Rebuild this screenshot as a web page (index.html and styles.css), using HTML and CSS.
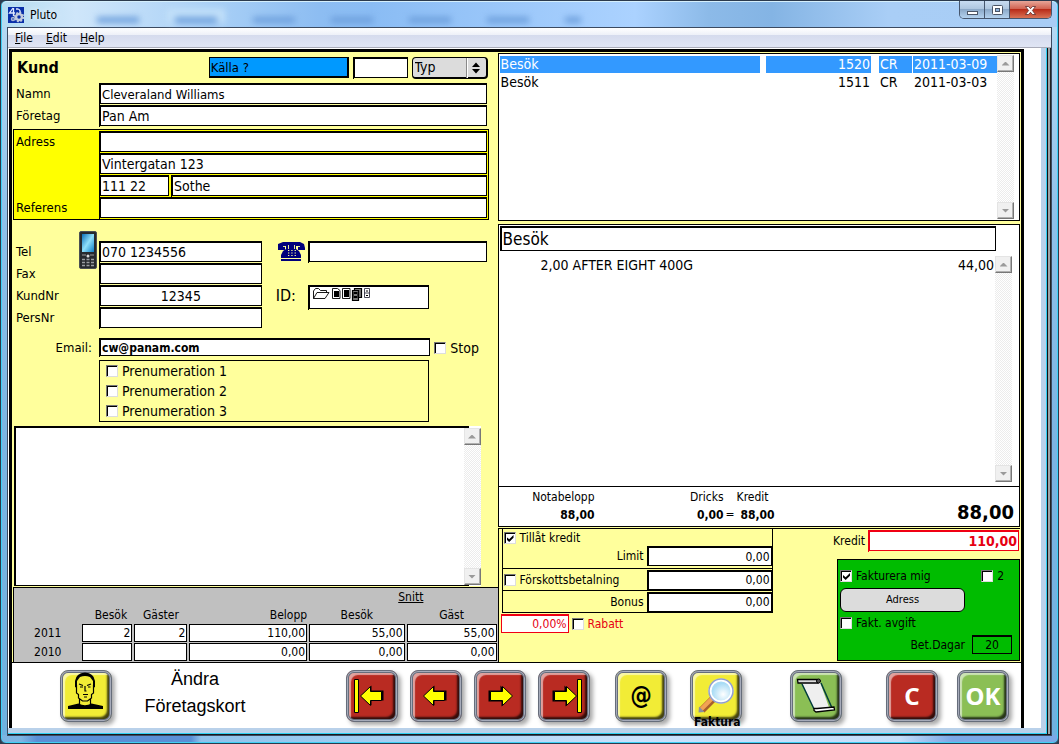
FILE: index.html
```html
<!DOCTYPE html>
<html lang="sv">
<head>
<meta charset="utf-8">
<title>Pluto</title>
<link rel="stylesheet" href="styles.css">
</head>
<body>
<div class="window">
  <header class="titlebar">
    <svg class="app-icon" width="16" height="16" viewBox="0 0 16 16" aria-hidden="true">
      <rect width="16" height="16" fill="#0a2fa8"/>
      <path d="M5 1L1.500 6H7M5.500 1V9M8 2h2q3 1 2 5" fill="none" stroke="#dfe8ff" stroke-width="1.300"/>
      <circle cx="11" cy="10" r="3" fill="none" stroke="#c3cbdc" stroke-width="2.500"/>
      <circle cx="11" cy="10" r="4.500" fill="none" stroke="#c3cbdc" stroke-width="1.500" stroke-dasharray="2 1.500"/>
      <circle cx="5" cy="12" r="1.500" fill="none" stroke="#a9b6d6" stroke-width="1.500"/>
    </svg>
    <h1 class="title">Pluto</h1>
    <div class="glass" aria-hidden="true"><i></i><i class="lit"></i><i></i><i></i><i></i><i></i><i class="short"></i></div>
    <div class="controls">
      <button type="button" aria-label="Minimize"><svg width="13" height="13" viewBox="0 0 13 13"><rect x="1.500" y="7.500" width="10" height="3" fill="#fff" stroke="#4b5566"/></svg></button>
      <button type="button" aria-label="Maximize"><svg width="13" height="13" viewBox="0 0 13 13"><rect x="1.500" y="1.500" width="10" height="9" rx="1" fill="#fff" stroke="#4b5566"/><rect x="4.500" y="4.500" width="4" height="3" fill="#8fb4dc" stroke="#4b5566"/></svg></button>
      <button type="button" class="close" aria-label="Close"><svg width="13" height="13" viewBox="0 0 13 13"><path d="M1.500 2.500h3l2 2.200 2-2.200h3L8.400 6.500l3.100 4h-3l-2-2.200-2 2.200h-3l3.100-4z" fill="#fff" stroke="#5a2a2a" stroke-width=".8"/></svg></button>
    </div>
  </header>

  <div class="client">
    <nav class="menu">
      <a href="#file"><u>F</u>ile</a><a href="#edit"><u>E</u>dit</a><a href="#help"><u>H</u>elp</a>
    </nav>
    <div class="scroller">
      <form class="card">
        <div class="panels">
          <section class="customer">
            <div class="head">
              <h2>Kund</h2>
              <input class="source" type="text" value="Källa ?" aria-label="Källa">
              <span class="slot code"><input class="field" type="text" aria-label="Kod"></span>
              <span class="picker">
                <select aria-label="Typ"><option>Typ</option></select>
                <svg width="20" height="20" viewBox="0 0 20 20" aria-hidden="true"><path d="M.5 0V20" stroke="#8a8a8a"/><path d="M1.500 0V20" stroke="#fff"/><path d="M10 4.500L14 9H6zM10 15.500L6 11h8z"/></svg>
              </span>
            </div>
            <div class="rows top">
              <label for="namn">Namn</label><span class="slot"><input class="field compact" id="namn" value="Cleveraland Williams"></span>
              <label for="foretag">Företag</label><span class="slot"><input class="field" id="foretag" value="Pan Am"></span>
            </div>
            <div class="rows address">
              <label for="adress">Adress</label><span class="slot"><input class="field" id="adress"></span>
              <span></span><span class="slot"><input class="field" aria-label="Gata" value="Vintergatan 123"></span>
              <span></span><span class="city"><span class="slot"><input class="field" aria-label="Postnummer" value="111 22"></span><span class="slot"><input class="field" aria-label="Ort" value="Sothe"></span></span>
              <label for="referens">Referens</label><span class="slot"><input class="field" id="referens"></span>
            </div>
            <div class="contact">
              <div class="rows numbers">
                <label for="tel">Tel
                  <svg class="mobile" width="18" height="38" viewBox="0 0 18 38" aria-hidden="true">
                    <defs><linearGradient id="lcd" x2="1" y2="1"><stop offset="0" stop-color="#0b6fb8"/><stop offset=".5" stop-color="#8fe0fa"/><stop offset="1" stop-color="#0a7cc4"/></linearGradient></defs>
                    <rect x=".5" y=".5" width="17" height="37" rx="1.500" fill="#262a2e" stroke="#4b5054"/>
                    <rect x="3" y="3" width="12" height="18" fill="url(#lcd)"/>
                    <path d="M3 24h4M11 24h4" stroke="#999"/><circle cx="9" cy="25" r="1.500" fill="#ddd"/>
                    <path d="M3 28.500h12M3 31.500h12M3 34.500h12" stroke="#9a9ea2" stroke-width="1.300" stroke-dasharray="3 1.500"/>
                  </svg>
                </label><span class="slot"><input class="field" id="tel" value="070 1234556"></span>
                <label for="fax">Fax</label><span class="slot"><input class="field" id="fax"></span>
                <label for="kundnr">KundNr</label><span class="slot"><input class="field center" id="kundnr" value="12345"></span>
                <label for="persnr">PersNr</label><span class="slot"><input class="field" id="persnr"></span>
              </div>
              <div class="extra">
                <svg width="27" height="21" viewBox="0 0 27 21" aria-hidden="true">
                  <path d="M5 1h17l4 2 1 4v2h-7V5h-2v3l3 2 2 4v6H3v-6l2-4 3-2V5H7v4H0V3z" fill="#00007c"/>
                  <path d="M3 17.500h20" stroke="#ffff9c"/><path d="M5 5.500h3M19 5.500h3M10.500 4v4M16.500 4v4" stroke="#ffff9c" stroke-width=".9"/>
                  <path d="M10 9.500h8M10 12h8M10 14.500h8" stroke="#ffff9c" stroke-dasharray="1.300 2"/>
                </svg>
                <span class="slot"><input class="field" aria-label="Telefon arbete"></span>
                <label class="big" for="idkort">ID:</label>
                <span class="slot idslot"><input class="field" id="idkort">
                  <svg class="files" width="60" height="16" viewBox="0 0 60 16" aria-hidden="true">
                    <path d="M1.500 11.500V4l2-2.500h3l2 2h6v2M1.500 11.500l3.500-6h12l-4 6z" fill="#fff" stroke="#000" stroke-width=".9"/>
                    <path d="M20.500 1.500h5l2.500 2v8h-7.500z" fill="#fff" stroke="#000" stroke-width=".9"/><path d="M22 4h5v6h-5z"/>
                    <path d="M30.500 1.500h7.500v10h-7.500z" fill="#fff" stroke="#000" stroke-width=".9"/><path d="M32 3h5v7h-5z"/>
                    <path d="M40.500 3.500h6v10h-6zM42.500 3.500v-2h7v9h-3" fill="#777" stroke="#000" stroke-width="1.200"/><path d="M41.500 5h4v6h-4z"/><path d="M42 8h3" stroke="#fff"/>
                    <path d="M52.500 1.500h5v9h-5zM52.500 6h5" fill="#fff" stroke="#334" stroke-width=".9"/><path d="M54 4h2M54 8.500h2" stroke="#000"/>
                  </svg>
                </span>
              </div>
            </div>
            <div class="email">
              <label for="email">Email:</label>
              <span class="slot"><input class="field" id="email" type="email" value="cw@panam.com"></span>
              <label class="tick"><input type="checkbox">Stop</label>
            </div>
            <fieldset class="subs" aria-label="Prenumerationer">
              <label class="tick"><input type="checkbox">Prenumeration 1</label>
              <label class="tick"><input type="checkbox">Prenumeration 2</label>
              <label class="tick"><input type="checkbox">Prenumeration 3</label>
            </fieldset>
            <div class="notes">
              <textarea aria-label="Anteckningar"></textarea>
              <div class="bar"><button type="button" aria-label="Upp"></button><button type="button" class="down" aria-label="Ned"></button></div>
            </div>
            <div class="stats">
              <table>
                <colgroup><col class="c0"><col class="c1"><col class="c2"><col class="c3"><col class="c4"><col class="c5"></colgroup>
                <thead>
                  <tr class="super"><th colspan="4"></th><th colspan="2"><u>Snitt</u></th></tr>
                  <tr><th></th><th class="nudge">Besök</th><th>Gäster</th><th class="right">Belopp</th><th>Besök</th><th>Gäst</th></tr>
                </thead>
                <tbody>
                  <tr><th>2011</th><td>2</td><td>2</td><td>110,00</td><td>55,00</td><td>55,00</td></tr>
                  <tr><th>2010</th><td></td><td></td><td>0,00</td><td>0,00</td><td>0,00</td></tr>
                </tbody>
              </table>
            </div>
          </section>

          <section class="sales">
            <div class="history">
              <table>
                <colgroup><col><col class="nr"><col class="kind"><col class="date"></colgroup>
                <tr class="selected"><td><span>Besök</span></td><td class="right"><span>1520</span></td><td><span>CR</span></td><td><span>2011-03-09</span></td></tr>
                <tr><td><span>Besök</span></td><td class="right"><span>1511</span></td><td><span>CR</span></td><td><span>2011-03-03</span></td></tr>
              </table>
              <div class="bar"><button type="button" aria-label="Upp"></button><button type="button" class="down" aria-label="Ned"></button></div>
            </div>
            <div class="visit">
              <input class="field visit-name" aria-label="Händelse" value="Besök">
              <div class="items">
                <div class="item"><span>2,00 AFTER EIGHT 400G</span><span>44,00</span></div>
                <div class="bar"><button type="button" aria-label="Upp"></button><button type="button" class="down" aria-label="Ned"></button></div>
              </div>
              <div class="sums">
                <div class="s1"><span>Notabelopp</span><b>88,00</b></div>
                <div class="s2"><span>Dricks</span><b>0,00</b></div>
                <span class="eq">=</span>
                <div class="s3"><span>Kredit</span><b>88,00</b></div>
                <strong>88,00</strong>
              </div>
            </div>
            <div class="terms">
              <div class="credit">
                <div class="limits">
                  <div class="line first"><label class="tick"><input type="checkbox" checked>Tillåt kredit</label><label for="limit">Limit</label><input class="field" id="limit" value="0,00"></div>
                  <div class="line"><label class="tick"><input type="checkbox">Förskottsbetalning</label><input class="field" aria-label="Förskott" value="0,00"></div>
                  <div class="line"><label for="bonus">Bonus</label><input class="field" id="bonus" value="0,00"></div>
                </div>
                <div class="discount"><input class="field red" aria-label="Rabatt procent" value="0,00%"><label class="tick"><input type="checkbox">Rabatt</label></div>
              </div>
              <div class="invoice">
                <div class="owed"><label for="kredit">Kredit</label><span class="slot red"><input class="field red" id="kredit" value="110,00"></span></div>
                <div class="green">
                  <div class="pair"><label class="tick"><input type="checkbox" checked>Fakturera mig</label><label class="tick two"><input type="checkbox">2</label></div>
                  <button type="button" class="pill">Adress</button>
                  <label class="tick fee"><input type="checkbox">Fakt. avgift</label>
                  <div class="days"><label for="dagar">Bet.Dagar</label><input class="field" id="dagar" value="20"></div>
                </div>
              </div>
            </div>
          </section>
        </div>

        <div class="toolbar">
          <button type="button" class="key yellow person" aria-label="Kundbild">
            <svg width="36" height="38" viewBox="0 0 36 38"><path d="M7 15V9Q8 1 17 .5 26 1 27 9v6l-2 1V9l-3-4q-5-2-10 0L9 9v7z"/><path d="M8.500 13v8l2 1.500v3.500l4 3h5l4-3v-3.500l2-1.500v-8M11.500 27v5M22.500 27v5" fill="none" stroke="#000" stroke-width="1.200"/><path d="M11 12l4 1.500M19 13.500l4-1.500M12 15h3M20 15h2.500M17 14v5h1.500M15 22.500h5M16 25h3" fill="none" stroke="#000" stroke-width="1.200"/><path d="M0 37v-3l10.500-2.500q6.500 3.500 13 0L35 34v3z"/></svg>
          </button>
          <p class="edit">Ändra<br>Företagskort</p>
          <div class="nav">
            <button type="button" class="key crimson" aria-label="Första"><svg width="40" height="38" viewBox="0 0 40 38"><path d="M2.500 2.500h4v33h-4z" fill="#ff0" stroke="#000"/><path d="M10 18l9.500-9.500v5H31.500v10h-12v5z"/><path d="M8.500 19l10-9.500v5H29.500v9H18.500v5z" fill="#ff0" stroke="#000"/></svg></button>
            <button type="button" class="key crimson" aria-label="Föregående"><svg width="40" height="38" viewBox="0 0 40 38"><path d="M9 18l9.500-9.500v5H30.500v10h-12v5z"/><path d="M7.500 19l10-9.500v5H28.500v9H17.500v5z" fill="#ff0" stroke="#000"/></svg></button>
            <button type="button" class="key crimson" aria-label="Nästa"><svg width="40" height="38" viewBox="0 0 40 38"><path d="M31 20l-9.500 9.500v-5H8.500v-11h12v-5z"/><path d="M32.500 19l-10 9.500v-5H10.500v-9h12v-5z" fill="#ff0" stroke="#000"/></svg></button>
            <button type="button" class="key crimson" aria-label="Sista"><svg width="40" height="38" viewBox="0 0 40 38"><path d="M31 20l-9.500 9.500v-5H8.500v-11h12v-5z"/><path d="M32.500 19l-10 9.500v-5H10.500v-9h12v-5z" fill="#ff0" stroke="#000"/><path d="M33.500 2.500h4v33h-4z" fill="#ff0" stroke="#000"/></svg></button>
          </div>
          <button type="button" class="key yellow mail">@</button>
          <button type="button" class="key yellow find" aria-labelledby="fakt">
            <svg width="40" height="40" viewBox="0 0 40 40"><defs><radialGradient id="lens" cx=".6" cy=".65"><stop offset="0" stop-color="#fff"/><stop offset="1" stop-color="#a9dcf5"/></radialGradient></defs><path d="M17 23L6 34" stroke="#a85f2a" stroke-width="7"/><path d="M16.500 22L5 33.500" stroke="#f2a354" stroke-width="4"/><path d="M3 30.500l5.500 5.500-6 .5z" fill="#8a8fa0"/><circle cx="25" cy="15" r="11" fill="url(#lens)" stroke="#fff" stroke-width="3"/><circle cx="25" cy="15" r="12" fill="none" stroke="#8f9dd0" stroke-width="1.500"/></svg>
            <span id="fakt">Faktura</span>
          </button>
          <div class="final">
            <button type="button" class="key lime scroll" aria-label="Kvitto"><svg width="40" height="36" viewBox="0 0 40 36"><path d="M6 5L18 32h16L24 4z" fill="#efefef"/><path d="M6 6l12 25M25 5l11 25" stroke="#003c3c" stroke-width="1.500"/><path d="M1.500 1.500H21l1 3.500H2z" fill="#ddd" stroke="#000" stroke-width="1.300"/><circle cx="22.500" cy="3" r="2" fill="#555" stroke="#000"/><path d="M18 30.500h3l17-1.500.5 3-18.500 2-2-1.500z" fill="#fff" stroke="#000" stroke-width="1.300"/></svg></button>
            <button type="button" class="key crimson cancel">C</button>
            <button type="button" class="key lime">OK</button>
          </div>
        </div>
      </form>
    </div>
  </div>
</div>
</body>
</html>
```
FILE: styles.css
```css
:root {
  --ui: "DejaVu Sans Condensed", "DejaVu Sans", sans-serif;
  --pale: #ffff9c;
}
* { box-sizing: border-box; }
html { background: #2c3e50; }
body { margin: 0; font: 14px/16px var(--ui); color: #000; }
input, select, textarea, button { font: inherit; color: inherit; margin: 0; border-radius: 0; }
h1, h2, p { margin: 0; }

/* window frame */
.window {
  display: flex; flex-direction: column; min-height: 100vh;
  padding: 0 6px 7px;
  border: 1px solid #2b3a4d; border-radius: 6px;
  box-shadow: inset 0 0 0 1px #3fd0f5;
  background:
    linear-gradient(90deg, transparent 20px, #5a8fd6 36px 190px, transparent 200px) 0 100% / 100% 8px no-repeat,
    linear-gradient(90deg, #7cb4e2, #9bcaf0 30%, #c9e1fb 60%, #c5defa 85%, #7ca8e6 90%) 0 100% / 100% 8px no-repeat,
    linear-gradient(#b9dcf4, #8fc0ea 30%, #7cb4e2 60%, #6fb1e0);
}
.titlebar {
  display: flex; align-items: center; height: 26px; margin: 0 -5px; padding-left: 6px;
  border-top: 1px solid #d5effc; border-radius: 5px 5px 0 0;
  background: linear-gradient(90deg, #b4dcf0, #cfe6fa 7%, #a9d0f6 20%, #8dbdf2 30%, #8abcf4 35%, #abd2ff 60%, #8cbae8 67%, #84b4e4 73%, #a9cef6 84%, #a8cdf5);
}
.title { font-size: 12px; font-weight: 400; margin-left: 6px; text-shadow: 0 0 6px #fff; }
.glass { display: flex; flex: 1; gap: 36px; margin-left: 40px; filter: blur(3px); overflow: hidden; }
.glass i { width: 42px; height: 6px; margin: 10px 0 0; background: #6d9fdc; }
.glass .lit { box-shadow: 0 0 0 8px #c2e0f9; }
.glass .short { width: 16px; }
.controls { display: flex; align-self: flex-start; margin: -1px 5px 0 0; border: 1px solid #46566d; border-top: 0; border-radius: 0 0 5px 5px; overflow: hidden; }
.controls button { width: 25px; height: 17px; padding: 2px 0 0; border: 0; border-right: 1px solid #46566d; background: linear-gradient(#c8dcf1, #adc5de 48%, #8ca9c8 50%, #b4d2ee); line-height: 0; }
.controls .close { width: 41px; border: 0; background: linear-gradient(#e7a598, #d0604e 48%, #b92c19 50%, #d97355); }

.client { display: flex; flex: 1; flex-direction: column; border: 1px solid #3b4a60; background: #fff; }
.menu { display: flex; gap: 13px; height: 20px; padding: 2px 7px; border-bottom: 1px solid #a9abb8; background: linear-gradient(#fff, #eef1f8 35%, #d5dbed 36%, #e0e5f4); }
.menu a { color: #000; text-decoration: none; font-size: 12px; }
.scroller {
  display: flex; flex: 1; padding: 1px 27px 7px 1px;
  background:
    linear-gradient(#18181c, #18181c) 0 100% / 100% 1px no-repeat,
    linear-gradient(#2ed0f2, #2ed0f2) 0 calc(100% - 1px) / calc(100% - 4px) 1px no-repeat,
    linear-gradient(270deg, #222 1px, #a0a4a8 1px 3px, #111 3px 4px, #2ed0f2 4px 5px, #b9d1ea 5px 10px, transparent 10px),
    linear-gradient(#b9d1ea, #b9d1ea) 0 100% / 100% 7px no-repeat, #fff;
}
.card { display: flex; flex: 1; min-width: 0; flex-direction: column; border: 3px solid #000; border-bottom: 0; background: var(--pale); }
.panels { display: grid; flex: 1; grid-template-columns: minmax(0, 486fr) minmax(0, 524fr); border-bottom: 1px solid #000; }

/* shared controls */
.slot { display: block; min-width: 0; padding-bottom: 1px; border-left: 1px solid #000; }
.field { display: block; width: 100%; min-width: 0; height: 21px; padding: 0 1px; border: 1px solid #000; border-top-width: 2px; background: #fff; outline: 0; }
.compact { font-size: 13px; }
.center { text-align: center; }
.right { text-align: right; }
.red { border-color: #f00014; color: #e60012; }
.tick { display: flex; align-items: center; gap: 4px; }
.tick input { appearance: none; flex: none; width: 12px; height: 12px; background: #fff; border: 1px solid #ddd; border-top-color: #777; border-left-color: #777; box-shadow: inset 1px 1px #000; }
.tick input:checked::before { content: ""; display: block; width: 7px; height: 7px; margin: 2px; background: #000; clip-path: polygon(0 30%, 38% 62%, 100% 0, 100% 38%, 38% 100%, 0 66%); }
.bar { display: flex; flex: none; flex-direction: column; justify-content: space-between; width: 17px; background: repeating-conic-gradient(#ececec 0 25%, #fff 0 50%) 0 0 / 2px 2px; }
.bar button { display: grid; place-items: center; width: 17px; height: 17px; padding: 0; background: #f0f0f0; border: 1px solid #fff; border-color: #e4e4e4 #777 #777 #e4e4e4; box-shadow: inset -1px -1px #b0b0b0; }
.bar button::before { content: ""; width: 8px; height: 4px; background: #9a9a9a; clip-path: polygon(50% 0, 100% 100%, 0 100%); }
.bar .down::before { clip-path: polygon(0 0, 100% 0, 50% 100%); }

/* customer */
.customer { display: flex; flex-direction: column; padding-left: 1px; }
.head { display: grid; grid-template-columns: minmax(0, 192fr) minmax(0, 140fr) 55px 76px; column-gap: 4px; align-items: center; height: 31px; padding-right: 10px; }
.head h2 { padding-left: 4px; font-size: 16px; line-height: 20px; }
.source { width: 100%; height: 21px; padding: 0 1px; border: 1px solid #000; border-width: 1px 2px 2px 1px; background: #0099ff; font-size: 13px; }
.picker { position: relative; }
.picker select { appearance: none; display: block; width: 100%; height: 22px; padding: 0 2px; border: 1px solid #000; border-bottom-width: 2px; border-right-width: 2px; border-radius: 4px; background: #dcdcdc; font-size: 14px; }
.picker svg { position: absolute; right: 2px; top: 1px; pointer-events: none; }
.rows { display: grid; grid-template-columns: 86px minmax(0, 1fr); align-items: center; grid-auto-rows: 22px; }
.rows > label { padding-left: 3px; font-size: 13px; }
.top { padding-right: 11px; margin-bottom: 2px; }
.address { padding: 1px 1px 0 0; margin-right: 9px; border: 1px solid #000; background: #ff0; grid-template-columns: 85px minmax(0, 1fr); }
.address > label { padding-left: 2px; }
.city { display: grid; grid-template-columns: 70px minmax(0, 1fr); column-gap: 2px; }
.contact { display: grid; grid-template-columns: minmax(0, 249fr) minmax(0, 225fr); padding: 21px 11px 0 0; }
.numbers > label { position: relative; }
.mobile { position: absolute; left: 66px; top: -13px; }
.extra { display: grid; grid-template-columns: 30px minmax(0, 1fr); grid-template-rows: 22px 22px 25px; padding-left: 16px; }
.extra .big { grid-row: 3; font-size: 16px; line-height: 22px; white-space: nowrap; margin-left: -2px; }
.idslot { position: relative; grid-row: 3; margin-right: 58px; }
.idslot .field { height: 24px; }
.files { position: absolute; left: 3px; top: 2px; }
.email { display: grid; grid-template-columns: 79px minmax(0, 337fr) minmax(0, 67fr); align-items: center; padding: 9px 0 3px; }
.email label:first-child { text-align: right; font-size: 13px; }
.email .slot { margin-left: 7px; }
.email .field { height: 18px; font-weight: 700; font-size: 12px; }
.email .tick { padding-left: 4px; }
.subs { display: grid; grid-auto-rows: 20px; margin: 0 69px 4px 86px; padding: 0 6px; border: 1px solid #000; }
.notes { display: flex; flex: 1; min-height: 120px; margin: 0 17px 1px 1px; background: linear-gradient(#000, #000) 0 0 / calc(100% - 12px) 2px no-repeat, linear-gradient(#000, #000) 0 100% / calc(100% - 12px) 1px no-repeat, #fff; padding: 2px 0 1px; border-left: 2px solid #000; }
.notes .bar { background-color: #fff; }
.notes textarea { flex: 1; resize: none; border: 0; padding: 2px; background: transparent; outline: 0; }
.stats { background: #c0c0c0; border: 1px solid #000; border-bottom: 0; border-right: 0; font-size: 12px; }
.stats table { width: calc(100% + 1px); table-layout: fixed; border-spacing: 2px 1px; }
.c0 { width: 13.500%; } .c1 { width: 10.800%; } .c2 { width: 11.300%; } .c3 { width: 25%; } .c4 { width: 20.300%; }
.stats th { padding: 0; height: 17px; font-weight: 400; }
.stats .super th { height: 15px; padding-left: 16px; }
.stats .nudge { padding-left: 8px; }
.stats td { height: 18px; padding: 0 1px; border: 1px solid #000; background: #fff; text-align: right; line-height: 16px; }

/* sales */
.sales { display: flex; flex-direction: column; padding: 1px 1px 0 0; }
.history, .visit { border: 1px solid #000; background: #fff; }
.history { display: flex; align-items: stretch; height: 168px; padding: 1px 5px 1px 1px; margin-bottom: 3px; }
.history table { flex: 1; align-self: flex-start; table-layout: fixed; border-collapse: collapse; }
.history td { padding: 0; height: 18px; line-height: 17px; }
.history td span { display: block; padding: 0 1px; }
.history td:first-child span { margin-right: 6px; }
.history .right span { margin-right: 8px; }
.history td:nth-child(3) span { margin-right: 1px; }
.nr { width: 113px; } .kind { width: 34px; } .date { width: 84px; }
.selected span { background: #3399ff; color: #fff; }
.visit { display: flex; flex: 1; flex-direction: column; margin-bottom: 1px; }
.visit-name { width: calc(100% - 24px); height: 25px; margin: 1px; border-left-width: 2px; font-size: 17px; }
.items { display: flex; flex: 1; padding: 4px 7px 4px 42px; }
.item { display: flex; flex: 1; justify-content: space-between; padding: 1px 1px 0 0; align-self: flex-start; }
.sums { display: flex; align-items: flex-start; height: 40px; padding: 1px 5px 0 0; border-top: 1px solid #000; font-size: 12px; line-height: 18px; text-align: right; }
.sums div > * { display: block; }
.s1 { width: 96px; } .s2 { width: 129px; } .s3 { width: 38px; white-space: nowrap; }
.s3 span { text-align: left; }
.eq { align-self: flex-end; margin: 0 2px 3px; }
.sums strong { margin: 13px 0 0 auto; font-size: 20px; line-height: 22px; }
.terms { display: flex; flex: none; justify-content: space-between; min-height: 134px; padding-left: 3px; border-top: 1px solid #000; border-left: 1px solid #000; font-size: 12px; }
.terms .field { height: 20px; padding: 0 1px; text-align: right; }
.limits { width: 271px; border: 1px solid #000; border-top: 0; }
.line { display: flex; align-items: center; justify-content: flex-end; gap: 3px; height: 22px; border-top: 1px solid #000; }
.line .tick { margin-right: auto; padding-left: 1px; }
.line .field { width: 125px; border-left-width: 2px; }
.first { align-items: flex-end; height: 39px; padding-bottom: 2px; border-top: 0; }
.first .tick { align-self: flex-start; padding-top: 1px; }
.first label[for] { padding-bottom: 2px; }
.discount { display: flex; gap: 3px; margin: 1px 0 0 -1px; color: #e60012; }
.discount .field { width: 68px; height: 19px; border-color: #f00014; }
.invoice { width: 183px; }
.owed { display: flex; align-items: center; justify-content: flex-end; gap: 3px; padding: 1px 1px 0 0; }
.owed .slot { flex: none; width: 151px; }
.owed .field { height: 21px; font-size: 14px; font-weight: 700; }
.green { display: flex; flex-direction: column; margin-top: 7px; min-height: 102px; padding: 8px 7px 4px 2px; border: 1px solid #000; background: #00bc00; }
.pair { display: flex; justify-content: space-between; }
.two { padding-right: 8px; }
.pill { width: 125px; height: 24px; margin: 4px 0 3px; border: 1px solid #000; border-radius: 6px; background: #dcdcdc; font-size: 11px; }
.days { display: flex; align-items: center; justify-content: flex-end; gap: 7px; margin-top: 4px; }
.days .field { width: 40px; height: 19px; background: transparent; text-align: center; }

/* toolbar */
.toolbar { display: flex; flex: none; align-items: flex-start; height: 65px; padding: 7px 12px 0 48px; overflow: hidden; background: #fff; }
.key {
  position: relative; display: grid; place-items: center; flex: none; width: 52px; height: 52px; padding: 0;
  border: 1px solid #666d7b; border-radius: 8px;
  box-shadow: 3px 3px 4px #aaa, inset 0 0 0 1px #a6abba, inset 0 0 0 2px #666d7b, inset 4px 4px 1px #ffffff90, inset -4px -4px 2px #000000b8;
  color: #fff; font: 700 24px/30px "Noto Sans", sans-serif;
}
.yellow { background: #f2ec36; color: #000; }
.crimson { background: #b92b22; }
.lime { background: #8bbf55; }
.person { align-items: start; padding-top: 1px; }
.edit { width: 166px; font: 18px/27px "Liberation Sans", Arial, sans-serif; text-align: center; margin-top: -4px; }
.nav { display: flex; gap: 12px; margin-left: 68px; }
.mail { margin-left: 25px; font: 700 24px/28px "DejaVu Sans Condensed", sans-serif; }
.find { margin-left: 23px; }
.find span { position: absolute; left: 3px; top: 46px; font: 700 12px/11px var(--ui); }
.final { display: flex; margin-left: auto; }
.scroll { margin-right: 44px; }
.cancel { margin-right: 19px; }
```
